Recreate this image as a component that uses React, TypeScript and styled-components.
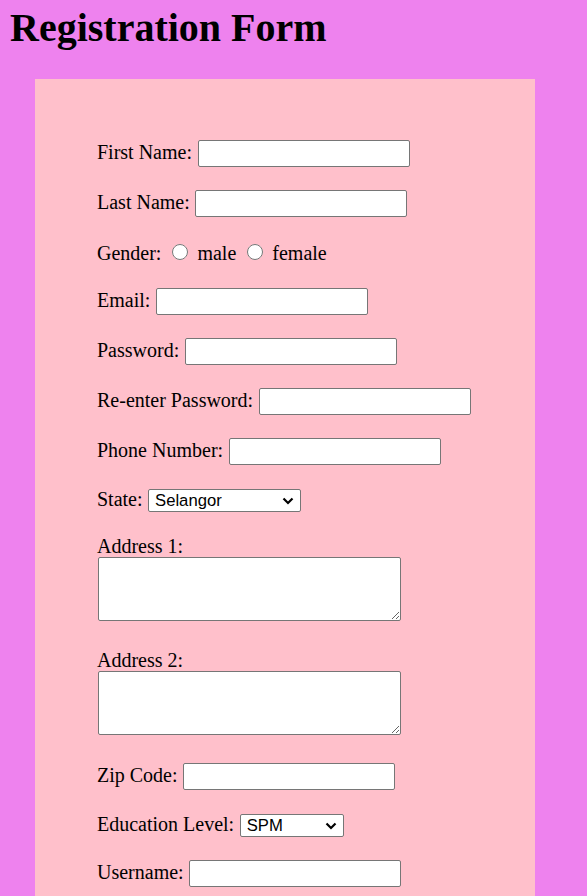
import styled, { createGlobalStyle } from 'styled-components';

const GlobalStyle = createGlobalStyle`
  body {
    margin: 0;
    background: #ee82ee;
    font-family: "Liberation Serif", "Times New Roman", serif;
    color: #000;
  }
`;

const TEXT_FIELDS_TOP = ['First Name:', 'Last Name:'];
const TEXT_FIELDS_MID = ['Email:', 'Password:', 'Re-enter Password:', 'Phone Number:'];

const Dropdown = ({ width, value, options }: { width: number; value: string; options: string[] }) => (
  <SelectWrap>
    <Select $width={width} defaultValue={value}>
      {options.map((o) => (
        <option key={o}>{o}</option>
      ))}
    </Select>
    <Chevron width="12" height="8" viewBox="0 0 12 8">
      <path d="M1.5 1.5 L6 6 L10.5 1.5" fill="none" stroke="#000" strokeWidth="2.2" />
    </Chevron>
  </SelectWrap>
);

export default function App() {
  return (
    <Page>
      <GlobalStyle />
      <Title>Registration Form</Title>
      <FormBox>
        {TEXT_FIELDS_TOP.map((label) => (
          <Row key={label}>
            <Label>{label}</Label>
            <TextInput type="text" />
          </Row>
        ))}
        <Row>
          <Label>Gender:</Label>
          <Radio type="radio" name="gender" />
          <Label>male</Label>
          <Radio type="radio" name="gender" />
          <Label>female</Label>
        </Row>
        {TEXT_FIELDS_MID.map((label) => (
          <Row key={label}>
            <Label>{label}</Label>
            <TextInput type={label.includes('Password') ? 'password' : 'text'} />
          </Row>
        ))}
        <Row>
          <Label>State:</Label>
          <Dropdown width={153} value="Selangor" options={['Selangor', 'Johor', 'Perak']} />
        </Row>
        <AddressField>
          <Label>Address 1:</Label>
          <TextArea />
        </AddressField>
        <AddressField>
          <Label>Address 2:</Label>
          <TextArea />
        </AddressField>
        <Row>
          <Label>Zip Code:</Label>
          <TextInput type="text" />
        </Row>
        <Row>
          <Label>Education Level:</Label>
          <Dropdown width={104} value="SPM" options={['SPM', 'Diploma', 'Degree']} />
        </Row>
        <Row>
          <Label>Username:</Label>
          <TextInput type="text" />
        </Row>
      </FormBox>
    </Page>
  );
}

const Page = styled.div`
  padding: 0 10px;
`;

const Title = styled.h1`
  margin: 6px 0 29px;
  font-size: 40px;
  font-weight: bold;
  line-height: 44px;
`;

const FormBox = styled.div`
  margin-left: 25px;
  width: 500px;
  box-sizing: border-box;
  background: #ffc0cb;
  padding: 61px 0 62px 62px;
`;

const Row = styled.div`
  display: flex;
  align-items: baseline;
  gap: 5.5px;
  margin-bottom: 23px;
`;

const Label = styled.span`
  font-size: 20px;
  line-height: 23px;
`;

const TextInput = styled.input`
  box-sizing: border-box;
  width: 212px;
  height: 27px;
  margin: 0;
  padding: 1px 2px;
  border: 1px solid #767676;
  border-radius: 2px;
  background: #fff;
  font-family: Arial, "Liberation Sans", sans-serif;
  font-size: 16.67px;
`;

const Radio = styled.input`
  width: 16px;
  height: 16px;
  margin: 4px 4px 0 5px;
`;

const SelectWrap = styled.span`
  position: relative;
  display: inline-flex;
`;

const Select = styled.select<{ $width: number }>`
  appearance: none;
  box-sizing: border-box;
  width: ${(p) => p.$width}px;
  height: 23px;
  margin: 0;
  padding: 0 20px 0 6px;
  border: 1px solid #767676;
  border-radius: 2px;
  background: #fff;
  color: #000;
  font-family: Arial, "Liberation Sans", sans-serif;
  font-size: 16.67px;
  line-height: 21px;
`;

const Chevron = styled.svg`
  position: absolute;
  right: 7px;
  top: 8px;
  pointer-events: none;
`;

const AddressField = styled.div`
  display: flex;
  flex-direction: column;
  align-items: flex-start;
  margin-bottom: 28px;

  & > span {
    line-height: 22px;
  }
`;

const TextArea = styled.textarea`
  box-sizing: border-box;
  width: 303px;
  height: 64px;
  margin: 0 0 0 1px;
  border: 1px solid #767676;
  border-radius: 2px;
  background: #fff;
`;
